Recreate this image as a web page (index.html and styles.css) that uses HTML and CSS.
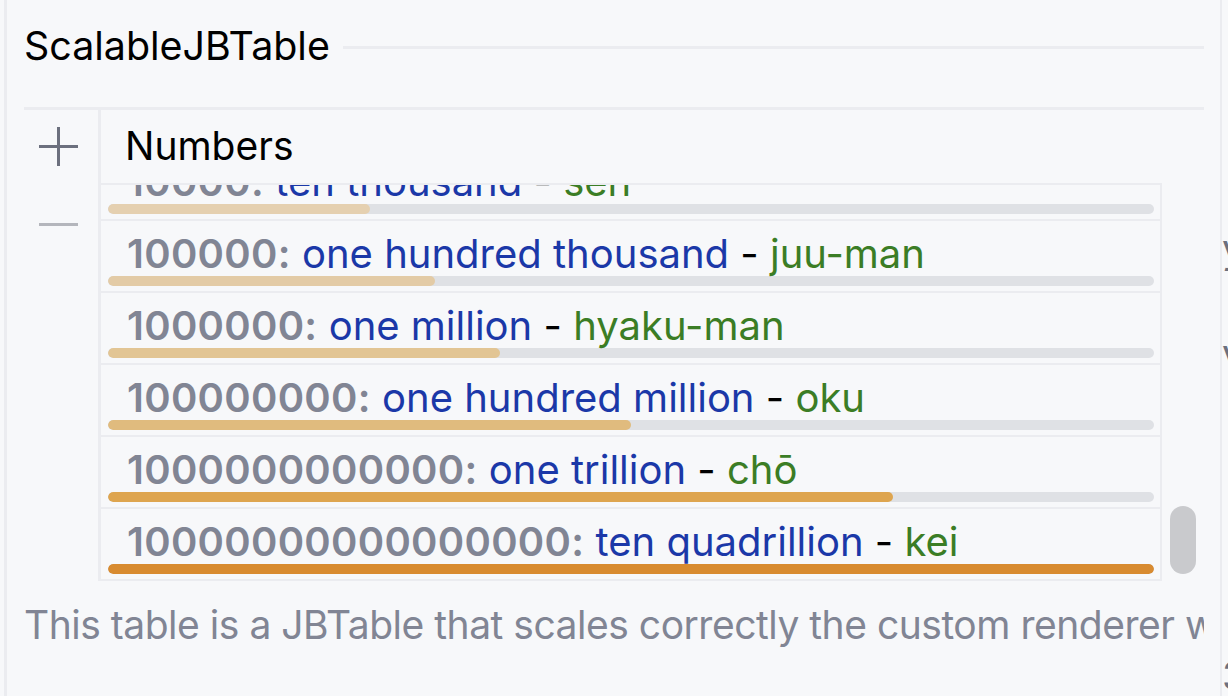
FILE: index.html
```html
<!DOCTYPE html>
<html lang="en">
<head>
<meta charset="utf-8">
<title>ScalableJBTable</title>
<link rel="stylesheet" href="styles.css">
</head>
<body>
<div class="page">
  <div class="panel">
    <div class="titled">
      <span class="title">ScalableJBTable</span>
      <span class="title-line"></span>
    </div>
    <div class="decorator">
      <div class="toolbar">
        <svg class="icon" width="39" height="39" viewBox="0 0 39 39"><path d="M19.5 0v39M0 19.5h39" stroke="#6c707e" stroke-width="3" fill="none"/></svg>
        <svg class="icon" width="39" height="39" viewBox="0 0 39 39"><path d="M0 19.5h39" stroke="#b4b6bc" stroke-width="3" fill="none"/></svg>
      </div>
      <div class="table">
        <div class="header">Numbers</div>
        <div class="body">
          <div class="viewport">
            <div class="rows">
              <div class="row">
                <div class="row-text"><span class="num">10000:</span> <span class="en">ten thousand</span> - <span class="jp">sen</span></div>
                <div class="bar"><div class="fill" style="width:25%;background:#e5d0b0"></div></div>
              </div>
              <div class="row">
                <div class="row-text"><span class="num">100000:</span> <span class="en">one hundred thousand</span> - <span class="jp">juu-man</span></div>
                <div class="bar"><div class="fill" style="width:31.25%;background:#e3cba6"></div></div>
              </div>
              <div class="row">
                <div class="row-text"><span class="num">1000000:</span> <span class="en">one million</span> - <span class="jp">hyaku-man</span></div>
                <div class="bar"><div class="fill" style="width:37.5%;background:#e2c594"></div></div>
              </div>
              <div class="row">
                <div class="row-text"><span class="num">100000000:</span> <span class="en">one hundred million</span> - <span class="jp">oku</span></div>
                <div class="bar"><div class="fill" style="width:50%;background:#e0bb7e"></div></div>
              </div>
              <div class="row">
                <div class="row-text"><span class="num">1000000000000:</span> <span class="en">one trillion</span> - <span class="jp">chō</span></div>
                <div class="bar"><div class="fill" style="width:75%;background:#dea54f"></div></div>
              </div>
              <div class="row">
                <div class="row-text"><span class="num">10000000000000000:</span> <span class="en">ten quadrillion</span> - <span class="jp">kei</span></div>
                <div class="bar"><div class="fill" style="width:100%;background:#d88b30"></div></div>
              </div>
            </div>
          </div>
          <div class="scroll"><div class="thumb"></div></div>
        </div>
      </div>
    </div>
    <div class="desc">This table is a JBTable that scales correctly the custom renderer when the scale changes</div>
  </div>
  <div class="next">
    <div class="next-line first">y</div>
    <div class="next-line second">v</div>
    <div class="next-line third">3</div>
  </div>
</div>
</body>
</html>
```

FILE: styles.css
```css
html, body {
  margin: 0;
  padding: 0;
}

body {
  background: #f7f8fa;
  font-family: Inter, "Noto Sans", "Liberation Sans", sans-serif;
  color: #000;
}

.page {
  display: flex;
  width: 1228px;
  height: 696px;
  overflow: hidden;
}

.panel {
  box-sizing: border-box;
  flex: 0 0 1218px;
  margin-left: 4px;
  border-left: 3px solid #ebecf0;
  border-right: 2px solid #ebecf0;
  padding: 23px 16px 0 17px;
  min-width: 0;
}

.titled {
  display: flex;
  align-items: center;
  height: 47px;
}

.title {
  font-size: 39.4px;
  line-height: 47px;
  white-space: nowrap;
}

.title-line {
  flex: 1;
  height: 3px;
  margin: 2px 0 0 13px;
  background: #ebecf0;
}

.decorator {
  display: flex;
  margin-top: 37px;
  border-top: 3px solid #ebecf0;
}

.toolbar {
  box-sizing: border-box;
  flex: 0 0 74px;
  display: flex;
  flex-direction: column;
  align-items: flex-start;
  gap: 39px;
  padding: 17px 0 0 15px;
}

.icon {
  display: block;
}

.table {
  flex: 1;
  min-width: 0;
  display: flex;
  flex-direction: column;
  border-left: 3px solid #ebecf0;
}

.header {
  box-sizing: border-box;
  height: 73px;
  padding: 12px 0 0 24px;
  font-size: 39px;
  line-height: 47px;
}

.body {
  display: flex;
}

.viewport {
  flex: 0 0 1059px;
  height: 396px;
  overflow: hidden;
  border-top: 2px solid #ebecf0;
  border-right: 2px solid #ebecf0;
}

.rows {
  margin-top: -36px;
}

.row {
  box-sizing: border-box;
  height: 72px;
  padding-top: 10px;
  border-bottom: 2px solid #ebecf0;
}

.row-text {
  padding-left: 26px;
  font-size: 40px;
  line-height: 45px;
  white-space: nowrap;
  color: #000;
}

.num {
  font-weight: 600;
  letter-spacing: 0.3px;
  color: #818594;
}

.en {
  color: #1b38a8;
}

.jp {
  color: #3b7d25;
}

.bar {
  height: 10px;
  margin: 0 6px 0 7px;
  border-radius: 5px;
  background: #dfe1e5;
  overflow: hidden;
}

.fill {
  height: 100%;
  border-radius: 5px;
}

.scroll {
  flex: 1;
  padding-left: 8px;
}

.thumb {
  width: 26px;
  height: 68px;
  margin-top: 323px;
  border-radius: 13px;
  background: #c9cacd;
}

.desc {
  margin-top: 20px;
  font-size: 39px;
  line-height: 47px;
  letter-spacing: -0.48px;
  color: #818594;
  white-space: nowrap;
  overflow: hidden;
}

.next {
  flex: 1;
  min-width: 0;
  overflow: hidden;
  padding-top: 225px;
  font-size: 39px;
  line-height: 47px;
  color: #6c707e;
}

.next-line {
  white-space: nowrap;
}

.second {
  margin-top: 58px;
}

.third {
  margin-top: 275px;
}
```
